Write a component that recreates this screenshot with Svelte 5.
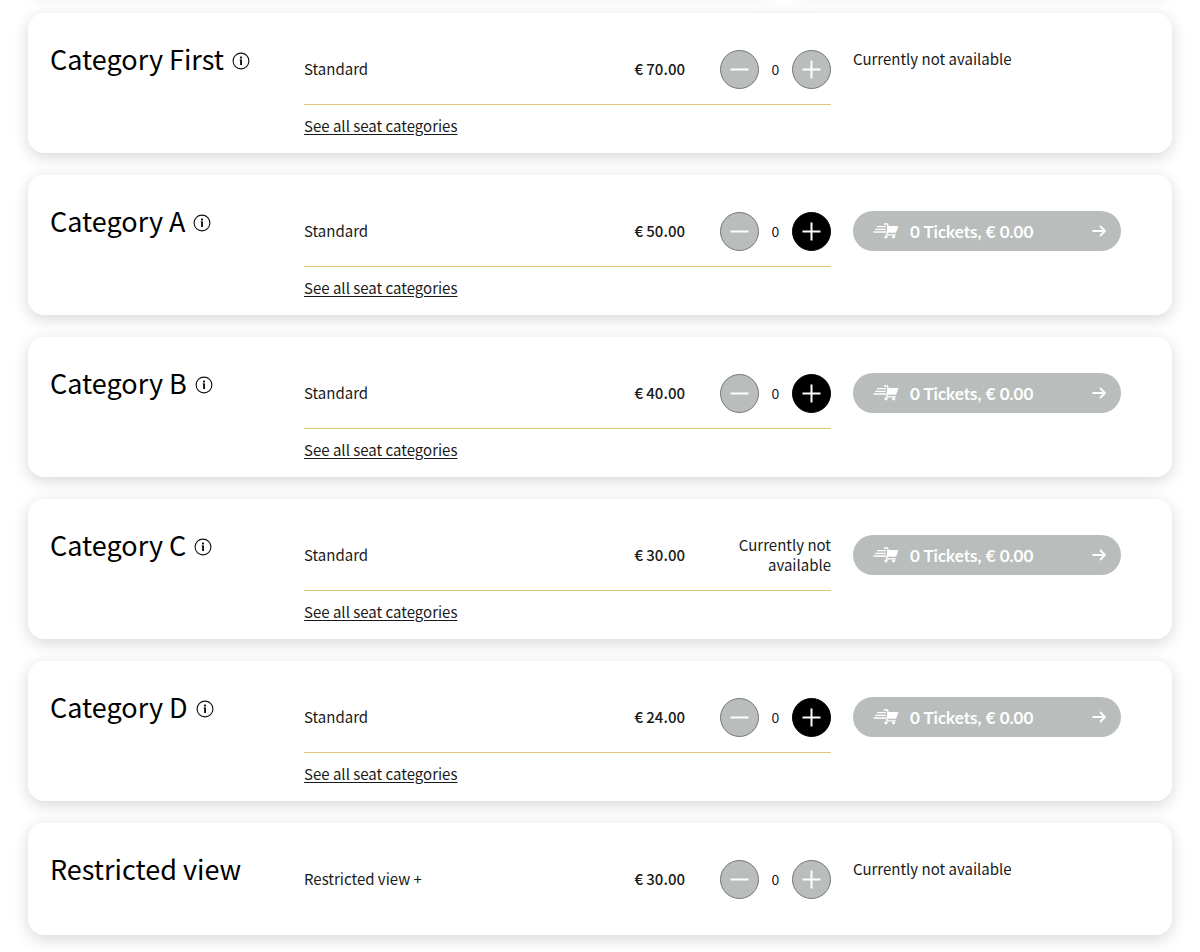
<script lang="ts">
  type Category = {
    name: string;
    info: boolean;
    ticket: string;
    price: string;
    available: boolean;
    rowAvailable: boolean;
    link: boolean;
  };

  const categories: Category[] = [
    { name: 'Category First', info: true, ticket: 'Standard', price: '70.00', available: false, rowAvailable: true, link: true },
    { name: 'Category A', info: true, ticket: 'Standard', price: '50.00', available: true, rowAvailable: true, link: true },
    { name: 'Category B', info: true, ticket: 'Standard', price: '40.00', available: true, rowAvailable: true, link: true },
    { name: 'Category C', info: true, ticket: 'Standard', price: '30.00', available: true, rowAvailable: false, link: true },
    { name: 'Category D', info: true, ticket: 'Standard', price: '24.00', available: true, rowAvailable: true, link: true },
    { name: 'Restricted view', info: false, ticket: 'Restricted view +', price: '30.00', available: false, rowAvailable: true, link: false }
  ];

  let counts: number[] = $state(categories.map(() => 0));
</script>

<div class="above"><span></span><span></span></div>
<main>
  {#each categories as category, i}
    <section class="card">
      <div class="title">
        <h2>{category.name}</h2>
        {#if category.info}
          <button class="info" aria-label="Information about {category.name}">
            <svg viewBox="0 0 18 18" width="18" height="18" aria-hidden="true">
              <circle cx="9" cy="9" r="7.9" fill="none" stroke="#111" stroke-width="1.1" />
              <rect x="8" y="4.4" width="2" height="2" rx="0.5" fill="#111" />
              <path d="M7.6 7.9H9V13" fill="none" stroke="#111" stroke-width="0.8" />
              <path d="M9.1 7.5v5.6" fill="none" stroke="#111" stroke-width="1.8" />
            </svg>
          </button>
        {/if}
      </div>

      <div class="details">
        <div class="row" class:ruled={category.link}>
          <span class="ticket">{category.ticket}</span>
          <span class="price">€ {category.price}</span>
          {#if category.rowAvailable}
            <div class="stepper">
              <button class="round" aria-label="Remove ticket" disabled={counts[i] === 0} onclick={() => counts[i]--}>
                <svg viewBox="0 0 19 19" width="19" height="19" aria-hidden="true"><path d="M0.5 9.5h18" /></svg>
              </button>
              <output>{counts[i]}</output>
              <button class="round" aria-label="Add ticket" disabled={!category.available} onclick={() => counts[i]++}>
                <svg viewBox="0 0 19 19" width="19" height="19" aria-hidden="true"><path d="M0.5 9.5h18M9.5 0.5v18" /></svg>
              </button>
            </div>
          {:else}
            <span class="sold">Currently not available</span>
          {/if}
        </div>
        {#if category.link}
          <a href="#seats">See all seat categories</a>
        {/if}
      </div>

      <div class="order">
        {#if category.available}
          <button class="cart" disabled={counts[i] === 0}>
            <svg viewBox="0 0 26 16" width="26" height="16" aria-hidden="true">
              <path d="M4 3.6h9M2.2 6.3h10.5M0.5 9h12.5" stroke="#fff" stroke-width="1.3" />
              <path d="M11 1h3.4l0.8 2.6l-1.4 8.2h9" fill="none" stroke="#fff" stroke-width="1.3" />
              <path d="M14.4 3h11.1l-2.4 6.8h-9.4z" fill="#fff" />
              <circle cx="13" cy="13.8" r="1.6" fill="#fff" />
              <circle cx="20.6" cy="13.8" r="1.6" fill="#fff" />
            </svg>
            <span>{counts[i]} Tickets, € {(counts[i] * Number(category.price)).toFixed(2)}</span>
            <svg viewBox="0 0 14 12" width="14" height="12" aria-hidden="true">
              <path d="M0.5 6h12M8 1l5 5-5 5" fill="none" stroke="#fff" stroke-width="1.8" />
            </svg>
          </button>
        {:else}
          <p>Currently not available</p>
        {/if}
      </div>
    </section>
  {/each}
</main>

<style>
  :global(body) {
    background: #fff;
    overflow-x: hidden;
  }

  .above {
    display: grid;
    grid-template-columns: 745fr 377fr;
    gap: 22px;
    margin: 0 28px;
    height: 0;
  }

  .above span {
    height: 24px;
    margin-top: -34px;
    border-radius: 16px;
    box-shadow: 0 4px 16px rgba(0, 0, 0, 0.16);
  }

  main {
    display: flex;
    flex-direction: column;
    gap: 22px;
    padding: 13px 28px 16px;
    font-family: "Noto Sans CJK SC", "Noto Sans", sans-serif;
    font-size: 15px;
    line-height: 20px;
    color: #1a1a1a;
  }

  .card {
    display: grid;
    grid-template-columns: 232fr 527fr 297fr;
    gap: 22px;
    align-items: start;
    padding: 24px 22px 17px;
    border-radius: 16px;
    background: #fff;
    box-shadow: 0 4px 16px rgba(0, 0, 0, 0.16);
  }

  .title {
    display: flex;
    align-items: center;
    gap: 8px;
  }

  h2 {
    margin: 0;
    font-size: 27px;
    font-weight: 400;
    line-height: 44px;
    color: #000;
    white-space: nowrap;
  }

  button {
    border: 0;
    padding: 0;
    cursor: pointer;
  }

  button:disabled {
    cursor: default;
  }

  .info {
    display: flex;
    margin-top: 4px;
    background: none;
  }

  .row {
    display: grid;
    grid-template-columns: 1fr auto 146px;
    align-items: center;
    min-height: 64px;
    padding-bottom: 7px;
  }

  .ruled {
    margin-bottom: 11px;
    padding-bottom: 3px;
    border-bottom: 1px solid #dfc67a;
  }

  .price {
    font-weight: 500;
  }

  .stepper {
    display: flex;
    align-items: center;
    justify-content: space-between;
    width: 111px;
    justify-self: end;
  }

  output {
    font-size: 14px;
  }

  .round {
    display: flex;
    align-items: center;
    justify-content: center;
    width: 39px;
    height: 39px;
    border: 1px solid #000;
    border-radius: 50%;
    background: #000;
  }

  .round:disabled {
    border-color: #777;
    background: #b9bdbb;
  }

  .round path {
    stroke: #fff;
    stroke-width: 2;
  }

  .sold {
    width: 100px;
    justify-self: end;
    text-align: right;
  }

  a {
    color: #1a1a1a;
    text-underline-offset: 2px;
  }

  .order {
    padding: 12px 29px 0 0;
  }

  .cart {
    display: flex;
    align-items: center;
    width: 100%;
    height: 40px;
    padding: 0 15px 0 20px;
    border-radius: 20px;
    background: #000;
    color: #fff;
    font-family: Lato, sans-serif;
    font-size: 17px;
    font-weight: 700;
  }

  .cart:disabled {
    background: #b9bdbb;
  }

  .cart span {
    flex: 1;
    padding-left: 11px;
    text-align: left;
  }

  p {
    margin: 0;
  }
</style>
